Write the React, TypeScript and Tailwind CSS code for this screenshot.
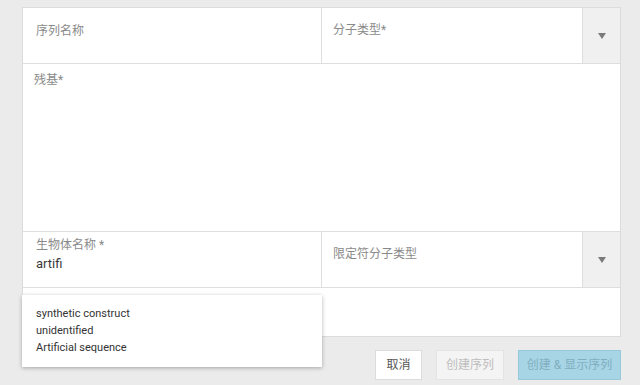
import React from "react";

const font = { fontFamily: 'Roboto, "Noto Sans CJK SC", sans-serif' };

const Caret: React.FC = () => (
  <div className="w-[38px] shrink-0 border-l border-[#dedede] bg-[#f0f0f0] flex items-center justify-center">
    <svg width="8" height="6" viewBox="0 0 8 6">
      <path d="M0 0 H8 L4 6 Z" fill="#7a7a7a" />
    </svg>
  </div>
);

const options = ["synthetic construct", "unidentified", "Artificial sequence"];

export default function App() {
  return (
    <div
      className="relative w-full h-[385px] bg-[#ebebeb] pt-[7px] pl-[22px] pr-[19px] overflow-hidden"
      style={font}
    >
      <div className="border border-[#dcdcdc] bg-white">
        {/* Row 1 */}
        <div className="flex h-[56px] border-b border-[#dedede]">
          <div className="w-[299px] border-r border-[#dedede] pl-[13px] pt-[15px] text-[12px] leading-[16px] text-[#8a8a8a]">
            序列名称
          </div>
          <div className="flex-1 pl-[11px] pt-[14px] text-[12px] leading-[16px] text-[#8a8a8a]">
            分子类型*
          </div>
          <Caret />
        </div>

        {/* Residues */}
        <div className="h-[168px] border-b border-[#dedede] pl-[11px] pt-[8px] text-[12px] leading-[16px] text-[#8a8a8a]">
          残基*
        </div>

        {/* Row 3 */}
        <div className="flex h-[56px] border-b border-[#dedede]">
          <div className="w-[299px] border-r border-[#dedede] pl-[13px] pt-[5px]">
            <div className="text-[12px] leading-[16px] text-[#8a8a8a]">生物体名称 *</div>
            <div className="mt-[3px] text-[13px] leading-[16px] text-[#3a3a3a]">artifi</div>
          </div>
          <div className="flex-1 pl-[11px] pt-[14px] text-[12px] leading-[16px] text-[#8a8a8a]">
            限定符分子类型
          </div>
          <Caret />
        </div>

        {/* Row 4 */}
        <div className="h-[48px]" />
      </div>

      {/* Buttons */}
      <div className="flex justify-end gap-[14px] mt-[13px] pr-0">
        <button className="w-[47px] h-[30px] bg-white border border-[#dcdcdc] text-[12px] text-[#555]">
          取消
        </button>
        <button className="w-[68px] h-[30px] bg-[#f4f4f4] border border-[#e3e3e3] text-[12px] text-[#bdbdbd]">
          创建序列
        </button>
        <button className="w-[103px] h-[30px] bg-[#a7d5e6] border border-[#97c9dc] text-[12px] text-[#80aebf]">
          创建 &amp; 显示序列
        </button>
      </div>

      {/* Autocomplete list */}
      <div className="absolute left-[22px] top-[295px] w-[300px] h-[72px] bg-white shadow-[0_1px_4px_rgba(0,0,0,0.3)] pl-[14px] pt-[10px]">
        {options.map((o) => (
          <div key={o} className="text-[11px] leading-[17px] text-[#333]">
            {o}
          </div>
        ))}
      </div>
    </div>
  );
}
